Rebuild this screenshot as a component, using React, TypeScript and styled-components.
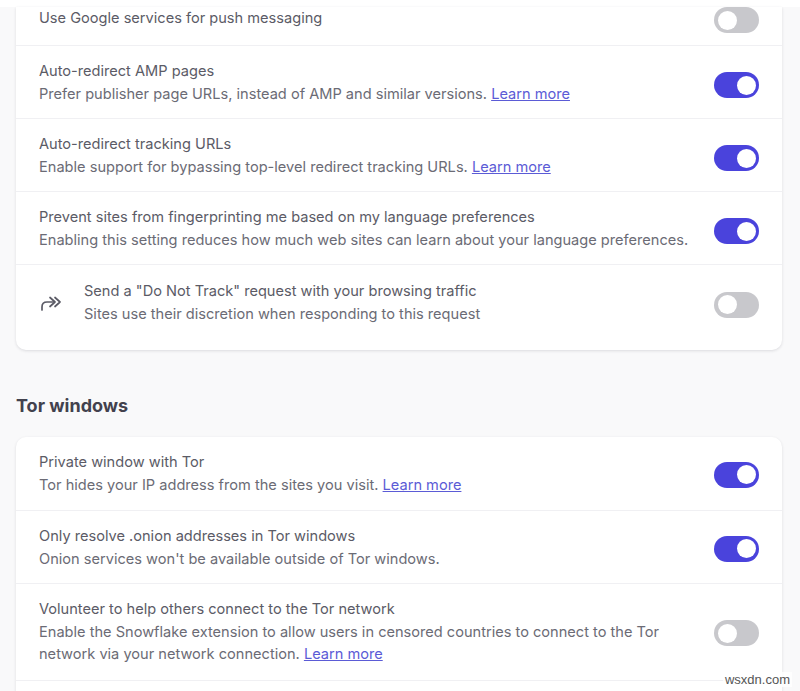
import styled, { createGlobalStyle } from 'styled-components';

const GlobalStyle = createGlobalStyle`
  html, body {
    margin: 0;
    padding: 0;
    background: #f9f9fa;
    overflow: hidden;
  }
  body {
    font-family: Inter, "Liberation Sans", sans-serif;
  }
`;

const Page = styled.div`
  position: relative;
  width: 800px;
  height: 691px;
  overflow: hidden;
  background: #f9f9fa;
`;

const TopStrip = styled.div`
  height: 7px;
  background: #fff;
`;

const Content = styled.div`
  padding: 0 18px 0 16px;
`;

const Card = styled.section<{ $pad?: number }>`
  background: #fff;
  border-radius: 0 0 10px 10px;
  box-shadow: 0 1px 3px rgba(40, 40, 60, 0.14);
  padding-bottom: ${(p) => p.$pad ?? 0}px;
`;

const SecondCard = styled(Card)`
  border-radius: 10px 10px 0 0;
`;

const Row = styled.div<{ $height: number; $top?: number }>`
  display: flex;
  align-items: center;
  box-sizing: border-box;
  min-height: ${(p) => p.$height}px;
  padding: ${(p) => p.$top ?? 0}px 23px 0 23px;
  border-bottom: 1px solid #f0f0f3;
  &:last-child {
    border-bottom: 0;
  }
`;

const TopRow = styled(Row)`
  align-items: flex-start;
`;

const RowIcon = styled.div`
  width: 44px;
  margin-left: 1px;
  flex: none;
  color: #5b5b66;
  display: flex;
  align-items: center;
`;

const RowText = styled.div`
  flex: 1;
  min-width: 0;
`;

const Title = styled.div`
  font-size: 14.6px;
  line-height: 22.7px;
  color: #5b5b66;
`;

const Desc = styled.div`
  font-size: 14.6px;
  line-height: 22.7px;
  color: #6b6b75;
`;

const More = styled.a`
  color: #5b5bd6;
  text-decoration: underline;
`;

const Toggle = styled.div<{ $on?: boolean; $drop?: number }>`
  flex: none;
  width: 45px;
  height: 26px;
  margin: ${(p) => p.$drop ?? 0}px 0 0 24px;
  border-radius: 13px;
  box-sizing: border-box;
  padding: 3.5px;
  display: flex;
  justify-content: ${(p) => (p.$on ? 'flex-end' : 'flex-start')};
  background: ${(p) => (p.$on ? '#4a43dc' : '#c8c8cc')};
  &::after {
    content: '';
    width: 19px;
    height: 19px;
    border-radius: 50%;
    background: #fff;
  }
`;

const Heading = styled.h2`
  margin: 0;
  padding: 44px 0 19px;
  font-size: 18px;
  line-height: 24px;
  font-weight: 700;
  color: #42414d;
`;

const Watermark = styled.span`
  position: absolute;
  right: 8px;
  bottom: 4px;
  font-family: "Liberation Sans", sans-serif;
  font-size: 13px;
  color: #555;
  background: rgba(255, 255, 255, 0.8);
  padding: 0 2px;
`;

const ArrowIcon = () => (
  <svg width="22" height="16" viewBox="0 0 22 16" fill="none" stroke="currentColor" strokeWidth="1.7" strokeLinecap="round" strokeLinejoin="round">
    <path d="M2 15v-3c0-3 2-5 5-5h7" />
    <path d="M10 2.5 15 7 10 11.5" />
    <path d="M15 2.5 20 7 15 11.5" />
  </svg>
);

const LearnMore = () => <More href="#">Learn more</More>;

export default function App() {
  return (
    <Page>
      <GlobalStyle />
      <TopStrip />
      <Content>
        <Card $pad={12}>
          <TopRow $height={39}>
            <RowText>
              <Title>Use Google services for push messaging</Title>
            </RowText>
            <Toggle />
          </TopRow>
          <Row $height={73} $top={2}>
            <RowText>
              <Title>Auto-redirect AMP pages</Title>
              <Desc>
                Prefer publisher page URLs, instead of AMP and similar versions. <LearnMore />
              </Desc>
            </RowText>
            <Toggle $on $drop={4} />
          </Row>
          <Row $height={73} $top={2}>
            <RowText>
              <Title>Auto-redirect tracking URLs</Title>
              <Desc>
                Enable support for bypassing top-level redirect tracking URLs. <LearnMore />
              </Desc>
            </RowText>
            <Toggle $on $drop={4} />
          </Row>
          <Row $height={73} $top={2}>
            <RowText>
              <Title>Prevent sites from fingerprinting me based on my language preferences</Title>
              <Desc>Enabling this setting reduces how much web sites can learn about your language preferences.</Desc>
            </RowText>
            <Toggle $on $drop={4} />
          </Row>
          <Row $height={73} $top={2}>
            <RowIcon>
              <ArrowIcon />
            </RowIcon>
            <RowText>
              <Title>Send a "Do Not Track" request with your browsing traffic</Title>
              <Desc>Sites use their discretion when responding to this request</Desc>
            </RowText>
            <Toggle $drop={4} />
          </Row>
        </Card>
        <Heading>Tor windows</Heading>
        <SecondCard>
          <Row $height={74}>
            <RowText>
              <Title>Private window with Tor</Title>
              <Desc>
                Tor hides your IP address from the sites you visit. <LearnMore />
              </Desc>
            </RowText>
            <Toggle $on $drop={2} />
          </Row>
          <Row $height={73} $top={1}>
            <RowText>
              <Title>Only resolve .onion addresses in Tor windows</Title>
              <Desc>Onion services won't be available outside of Tor windows.</Desc>
            </RowText>
            <Toggle $on $drop={2} />
          </Row>
          <Row $height={97}>
            <RowText>
              <Title>Volunteer to help others connect to the Tor network</Title>
              <Desc>
                Enable the Snowflake extension to allow users in censored countries to connect to the Tor network via your network connection. <LearnMore />
              </Desc>
            </RowText>
            <Toggle $drop={2} />
          </Row>
          <Row $height={60} />
        </SecondCard>
      </Content>
      <Watermark>wsxdn.com</Watermark>
    </Page>
  );
}
